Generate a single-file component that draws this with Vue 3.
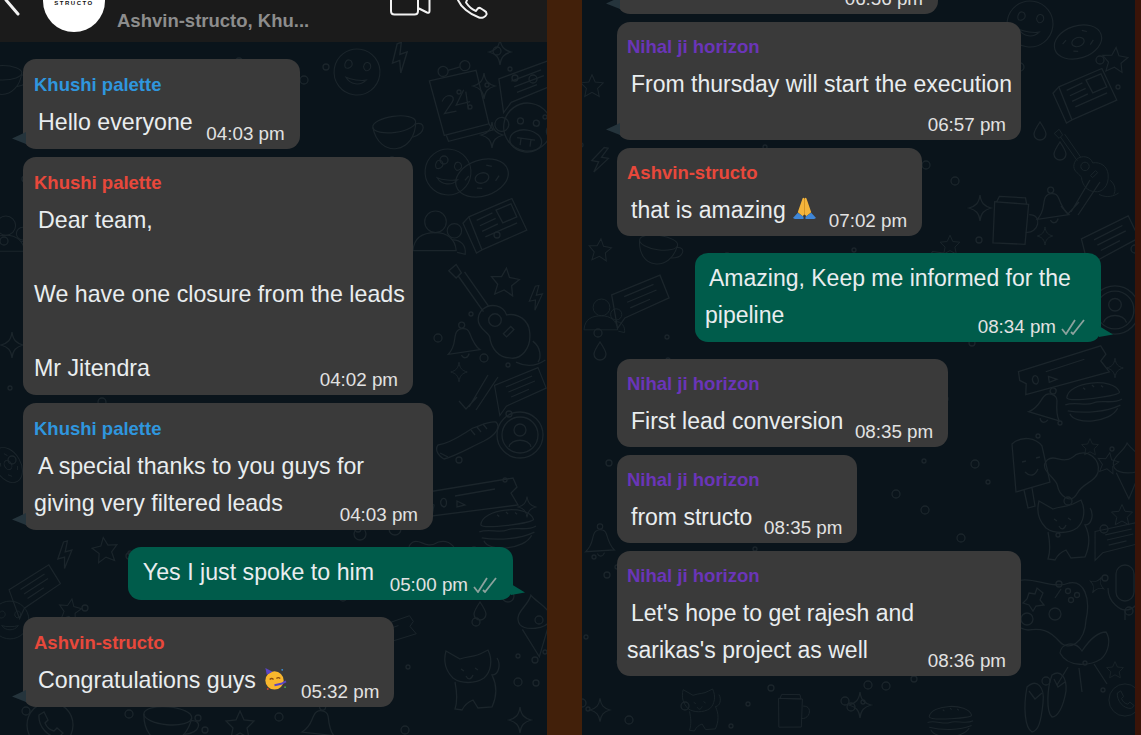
<template>
  <div class="screen">
    <svg class="wallpaper" width="1141" height="735" viewBox="0 0 1141 735" aria-hidden="true">
      <defs>
        <g id="d-star"><path d="M0-14 4-5 14-4 7 3 9 13 0 8-9 13-7 3-14-4-4-5Z" /></g>
        <g id="d-spark"><path d="M0-13C1-5 4-2 11 0 4 2 1 5 0 13-1 5-4 2-11 0-4-2-1-5 0-13Z" /></g>
        <g id="d-drop"><path d="M0-8C4-2 6 1 6 4A6 6 0 0 1-6 4C-6 1-4-2 0-8Z" /></g>
        <g id="d-bolt"><path d="M2-13-8 2-1 2-4 13 8-3 1-3 6-13Z" /></g>
        <g id="d-face">
          <circle r="27" />
          <path d="M-15-9C-14-14-8-14-7-9-6-5-11-2-14-3-15-4-16-7-15-9ZM7-9C8-14 14-14 15-9 16-6 13-3 10-3 8-4 6-7 7-9ZM-12 8C-6 16 6 16 12 8 6 10-6 10-12 8Z" />
        </g>
        <g id="d-calendar">
          <path d="M-27-18 20-27 31 27-14 37Z" />
          <path d="M-12 37-10 43 35 33 31 27" />
          <circle cx="-13" cy="-27" r="5" /><circle cx="9" cy="-32" r="5" />
          <path d="M-8-28 4-31" />
          <path d="M-15 3C-11-6 0-3-5 4L-13 15-1 13M7-8-1 7 13 4M9-6 11 12" />
        </g>
        <g id="d-cup">
          <ellipse cx="-3" cy="-9" rx="24" ry="9" />
          <path d="M-27-9C-26 8-16 18-4 18 8 18 19 8 21-9" />
          <path d="M20-6C32-9 32 6 15 8" />
        </g>
        <g id="d-card">
          <path d="M-27-10 24-21 29 3-18 15-27 24Z" />
          <path d="M-15-6 16-13M-13 0 18-7M-11 6 10 1" />
        </g>
        <g id="d-monkey">
          <circle cx="0" cy="-5" r="24" />
          <circle cx="-26" cy="-4" r="7" /><circle cx="26" cy="-4" r="7" />
          <ellipse cx="0" cy="9" rx="16" ry="11" />
          <circle cx="-8" cy="-10" r="3" /><circle cx="8" cy="-10" r="3" />
          <path d="M-9 7 9 7M-5 7-5 14M5 7 5 14" />
        </g>
        <g id="d-paper">
          <path d="M-22-13 24-22 32 12-16 22Z" />
          <path d="M-22-13-29-8-22 24-16 22" />
          <path d="M-15-8 2-12M-13-2 4-6M-12 4 5 0M-10 10 24 3M6-14 22-17 25-3 10 0Z" />
        </g>
        <g id="d-donut">
          <ellipse rx="27" ry="18" />
          <ellipse rx="7" ry="5" />
          <path d="M-17-3-12-6M-8 8-3 10M12 7 17 3M8-11 13-8" />
        </g>
        <g id="d-person">
          <circle cx="-5" cy="-18" r="12" />
          <path d="M-30 14C-29-2-18-6-5-6 8-6 17 1 18 14Z" />
          <circle cx="16" cy="-8" r="8" />
          <path d="M14 2C24 2 29 9 28 18L19 16" />
        </g>
        <g id="d-guitar">
          <path d="M-44-45-37-51-32-43-37-38Z" />
          <path d="M-35-40-11-6M-29-44-6-11" />
          <path d="M-12-8C-4-15 8-12 11-3 22-5 32 2 33 13 35 30 24 40 14 38 4 38-4 29-5 18-7 13-16 10-16 2-16-2-14-6-12-8Z" />
          <circle cx="0" cy="2" r="6" />
          <path d="M8 15 15 8 18 11 11 18Z" />
          <path d="M20 42C32 48 42 44 48 40M36 22C44 28 44 38 41 42" />
        </g>
        <g id="d-bell">
          <path d="M-16 13C-8 6-9-1-7-6-5-13 5-13 7-7 9 0 11 7 16 11Z" />
          <circle cy="-15" r="3" />
          <path d="M-3 15C-1 19 3 19 5 14" />
        </g>
        <g id="d-checks"><path d="M-19 6-12 14-1 2M-9 12 10-20M-2 15 20-18" /></g>
        <g id="d-shoe">
          <path d="M-32 10C-18 8-6-2 3-7 10-9 18-14 26-13 31-8 26 0 14 6-1 13-14 21-26 24-33 20-35 14-32 10Z" />
          <path d="M-30 18-22 22M1-5 5 0M7-8 11-3M13-11 17-6" />
        </g>
        <g id="d-avatar">
          <circle r="23" /><circle r="18" />
          <circle cy="-5" r="6" />
          <path d="M-11 12C-9 3 9 3 11 12" />
        </g>
        <g id="d-ticket">
          <path d="M-47 0 38-14 42-5 36 1 43 13-43 24-41 13-47 9Z" />
          <path d="M-20 4 20-3M-33 7C-28 4-27 14-31 15-35 14-35 9-33 7ZM-18 9-10 13-18 15Z" />
        </g>
        <g id="d-burger">
          <path d="M-26-4C-24-20 22-22 27-6 27-2-25 1-26-4Z" />
          <path d="M-28 3C-18 0-8 6 0 3 8 0 20 6 29 1M-26 9C-10 13 12 13 27 7M-24 12C-20 24 16 24 24 10" />
          <path d="M-9-13-7-11M0-15 2-13M9-14 11-12" />
        </g>
        <g id="d-popsicle">
          <path d="M-16-24C-6-33 8-30 14-22L22 14-12 24Z" />
          <path d="M-4 22 0 40 7 38 4 20" />
          <path d="M-6-6-2-7M8-10 12-11M-3 4C2 9 7 8 10 1" />
        </g>
        <g id="d-blob"><path d="M-25-12C-18-20-9-8 2-22 13-30 27-22 27-9 26 2 14 4 10 16 6 28-7 22-11 11-15 3-33-1-25-12Z" /></g>
        <g id="d-cat">
          <path d="M-24-29-10-21C-2-24 6-23 12-27L18-30C23-20 21-8 14-2 5 4-9 4-17-2-24-9-27-18-24-29Z" />
          <path d="M-9-11-6-9M5-12 8-10M-4-4C-2 0 1 0 3-5" />
          <path d="M-15 2C-13 12-12 20-15 29L-8 30C-5 24-2 22 3 20L8 28 22 27C27 16 27 5 22-5 29-5 31-16 27-22" />
        </g>
        <g id="d-controller">
          <path d="M-45-22C-30-38-5-17 14-25 29-28 36-10 31 12 30 34 14 45 4 33-6 22-14 20-27 22-44 21-51-5-45-22Z" />
          <path d="M-26-15-20-14-18-20-12-15-15-8-11-3-19-2-22 3-26-3-32-5-28-9Z" />
          <path d="M0-10 6-19" />
          <circle cx="13" cy="-17" r="2.5" /><circle cx="22" cy="-13" r="2.5" /><circle cx="16" cy="-8" r="2.5" />
          <circle cx="-28" cy="11" r="6" /><circle cx="0" cy="6" r="6" />
        </g>
        <g id="d-chair">
          <path d="M-25-7C-24-17-10-20-3-9 3-18 12-28 21-28 26-21 24-8 16-1 5 6-17 8-25-7Z" />
          <path d="M-17 7-28 25M-6 8-3 32M9 4 22 24" />
        </g>
        <g id="d-flops">
          <path d="M-20-16C-10-25-2-16-4 0-6 20-9 28-15 29-22 25-24 5-20-16ZM-18-12-12-4-5-10" />
          <path d="M5-28C14-34 20-25 19-12 16 6 10 14 5 14-1 9 0-15 5-28ZM7-24 11-16 18-21" />
        </g>
        <g id="d-mic">
          <rect x="-9" y="-25" width="18" height="36" rx="9" />
          <path d="M-17-2C-17 14-3 20 0 20 8 20 16 14 17-2M0 20 0 30" />
        </g>
        <g id="d-icecream">
          <path d="M-15-2C-21-14-5-19-1-30 4-22 20-14 15-2 10 5-10 5-15-2Z" />
          <path d="M-13 3 1 32 13 3" />
        </g>
        <g id="d-camera">
          <path d="M-22-14-10-15-7-21 6-21 10-16 24-17 26 15-20 18Z" />
          <circle cx="3" cy="0" r="10" /><circle cx="3" cy="0" r="5" />
        </g>
        <g id="d-jar">
          <path d="M-18-18 16-20 18 20-14 23ZM-14-24 12-26 14-20-16-18Z" />
          <path d="M18-10C32-12 30 8 17 8" />
        </g>
        <g id="d-phone">
          <circle r="23" />
          <path d="M-11-10-6-13-2-5-5-2C-3 3 0 5 4 6L7 3 13 8 9 12C-2 13-12 1-11-10Z" />
        </g>
      </defs>
      <g class="doodles">
        <use v-for="(d, i) in doodles" :key="i" :href="'#d-' + d[0]" :transform="`translate(${d[1]} ${d[2]}) rotate(${d[3] || 0}) scale(${d[4] || 1})`" />
        <circle v-for="(c, i) in specks" :key="'c' + i" :cx="c.x" :cy="c.y" :r="c.r" />
      </g>
    </svg>

    <section class="panel">
      <header class="chat-header">
        <svg class="back" width="22" height="20" viewBox="0 0 22 20"><path d="M6 0 18 14" /></svg>
        <div class="avatar"><span>STRUCTO</span></div>
        <div class="members">Ashvin-structo, Khu...</div>
        <svg class="video" width="42" height="18" viewBox="0 0 42 18">
          <path d="M2 0V11Q2 14.500 5.500 14.500H25.500Q29 14.500 29 11V0M29 8 38 12.500Q40.500 13.500 40.500 11V0" />
        </svg>
        <svg class="call" width="32" height="20" viewBox="0 0 32 20">
          <path d="M1 0C4 7 12 14 22 17.500 25 18.500 28.500 17 29.500 14.500 30 12.500 29 11.500 27 10.500L24 8.500C22.500 7.500 21 8 20 9.500L19 11C15 9.500 12 7 9 2.500L10 0" />
        </svg>
      </header>
      <div class="messages left">
        <div v-for="m in leftMessages" :key="m.id" class="bubble" :class="{ sent: m.sent, tail: m.tail, spaced: m.spaced }" :style="m.width ? { width: m.width + 'px' } : null">
          <div v-if="m.name" class="name" :class="m.color">{{ m.name }}</div>
          <div class="body">{{ m.text }}<svg v-if="m.emoji === 'party'" class="emoji" width="26" height="26" viewBox="0 0 26 26">
              <circle cx="13" cy="15" r="9.500" fill="#f8b62d" />
              <path d="M5 9 3.500 2 11 6Z" fill="#5b45c4" />
              <path d="M8 14Q10 12 12 14M15 13Q17 11 19 13" stroke="#8a4a10" stroke-width="1.300" fill="none" />
              <path d="M13 20 20 18.500 25 16" stroke="#5b45c4" stroke-width="2" fill="none" />
              <circle cx="6" cy="24" r="1" fill="#d0402c" /><circle cx="21" cy="4" r="1" fill="#3a8fd8" /><circle cx="24" cy="22" r="1" fill="#4aa04a" />
            </svg><span v-if="!m.below" class="spacer"></span></div>
          <div class="time">{{ m.time }}<svg v-if="m.sent" class="ticks" width="25" height="16" viewBox="0 0 25 16"><path d="M1 10 5 15 14 1M10 13 12 15 23 1" /></svg></div>
        </div>
      </div>
    </section>

    <div class="divider"></div>

    <section class="panel">
      <div class="messages right">
        <div v-for="m in rightMessages" :key="m.id" class="bubble" :class="{ sent: m.sent, tail: m.tail, spaced: m.spaced, clipped: m.clipped, 'time-row': m.timeRow }" :style="m.width ? { width: m.width + 'px' } : null">
          <div v-if="m.name" class="name" :class="m.color">{{ m.name }}</div>
          <div class="body">{{ m.text }}<svg v-if="m.emoji === 'pray'" class="emoji" width="26" height="26" viewBox="0 0 26 26">
              <path d="M13 3C12 1 11 2 10.500 4L6 17 11 21 13 19 15 21 20 17 15.500 4C15 2 14 1 13 3Z" fill="#f5b53c" />
              <path d="M13 3V19" stroke="#c98a1e" stroke-width="0.800" />
              <path d="M1 23 6 17.500 12 21.500 12 24H3ZM25 23 20 17.500 14 21.500 14 24H23Z" fill="#3f86d6" />
            </svg><span v-if="!m.below" class="spacer"></span></div>
          <div class="time">{{ m.time }}<svg v-if="m.sent" class="ticks" width="25" height="16" viewBox="0 0 25 16"><path d="M1 10 5 15 14 1M10 13 12 15 23 1" /></svg></div>
        </div>
      </div>
    </section>

    <div class="edge"></div>
  </div>
</template>

<script setup>
const leftMessages = [
  { id: 1, name: 'Khushi palette', color: 'blue', text: 'Hello everyone', time: '04:03 pm', tail: true },
  { id: 2, name: 'Khushi palette', color: 'red', text: 'Dear team,\n\nWe have one closure from the leads\n\nMr Jitendra', time: '04:02 pm', width: 390, below: true },
  { id: 3, name: 'Khushi palette', color: 'blue', text: 'A special thanks to you guys for giving very filtered leads', time: '04:03 pm', width: 410, below: true, tail: true },
  { id: 4, sent: true, spaced: true, text: 'Yes I just spoke to him', time: '05:00 pm' },
  { id: 5, name: 'Ashvin-structo', color: 'red', text: 'Congratulations guys ', emoji: 'party', time: '05:32 pm', tail: true, spaced: true }
]

const rightMessages = [
  { id: 1, clipped: true, text: ' ', time: '06:56 pm', width: 321, below: true, tail: true },
  { id: 2, name: 'Nihal ji horizon', color: 'purple', text: 'From thursday will start the execution', time: '06:57 pm', width: 404, below: true, timeRow: true, tail: true },
  { id: 3, name: 'Ashvin-structo', color: 'red', text: 'that is amazing ', emoji: 'pray', time: '07:02 pm' },
  { id: 4, sent: true, spaced: true, text: 'Amazing, Keep me informed for the pipeline', time: '08:34 pm', width: 406, below: true },
  { id: 5, name: 'Nihal ji horizon', color: 'purple', text: 'First lead conversion', time: '08:35 pm', spaced: true },
  { id: 6, name: 'Nihal ji horizon', color: 'purple', text: 'from structo', time: '08:35 pm' },
  { id: 7, name: 'Nihal ji horizon', color: 'purple', text: "Let's hope to get rajesh and\nsarikas's project as well", time: '08:36 pm', width: 404, below: true }
]

// wallpaper: [shape, x, y, rotation, scale]
const doodles = [
  ['face', 357, 72, 8, 0.85], ['calendar', 457, 98, -2], ['spark', 484, 86], ['spark', 500, 52], ['cup', 398, 132, -8, 0.9],
  ['spark', 492, 135], ['face', 448, 172, 6, 0.85], ['monkey', 527, 132, 8], ['card', 527, 85, -8], ['bolt', 400, 58, -20, 1.1],
  ['paper', 493, 225, -12], ['donut', 482, 178, -18], ['person', 440, 238, 0, 0.9], ['star', 505, 282, 6], ['bolt', 536, 298, -12, 0.9],
  ['guitar', 495, 318, 0, 1.05], ['bell', 463, 340, -5], ['spark', 459, 372, 0, 0.75], ['checks', 478, 395], ['card', 520, 390, -10, 0.9],
  ['shoe', 470, 435, 0], ['avatar', 520, 435], ['ticket', 475, 492], ['burger', 507, 527, -4], ['spark', 527, 507, 0, 0.8],
  ['star', 105, 550, -8, 0.9], ['bolt', 65, 555, -15], ['card', 35, 590, -20, 0.9], ['phone', 50, 725], ['cat', 470, 680], ['icecream', 535, 625, -6],
  ['drop', 360, 530], ['drop', 395, 525], ['star', 70, 610, 10, 0.8], ['spark', 520, 720], ['face', 10, 620, 0, 0.7],
  ['cup', 170, 725, 5], ['star', 240, 725], ['bell', 320, 722, 10], ['ticket', 385, 630, -10, 0.7], ['blob', 430, 560, 20, 0.9], ['drop', 480, 610], ['drop', 508, 592],
  ['person', 10, 240, 0, 0.8], ['spark', 12, 345], ['cup', 5, 80, 0, 0.8], ['donut', 8, 465, 60, 0.7],
  ['face', 1030, 24, 8, 0.85], ['donut', 1078, 42, -18, 0.9], ['star', 1115, 60, 5, 0.9], ['paper', 1083, 95, -12], ['star', 592, 86, 0, 0.8],
  ['camera', 936, 270, 8, 0.85], ['jar', 1010, 222, 8], ['bell', 1052, 205, -5], ['spark', 980, 208], ['spark', 1045, 236, 0, 0.7], ['card', 1110, 242, -14],
  ['star', 950, 245, 0, 0.7], ['avatar', 1115, 310, 0, 1.05], ['checks', 1080, 200], ['guitar', 1085, 165, 0, 0.7], ['drop', 1040, 130], ['drop', 1060, 150],
  ['bell', 1048, 405, 20], ['burger', 1093, 400, -4], ['popsicle', 1028, 468], ['blob', 1070, 476, 10], ['star', 1090, 447, 0, 0.6], ['star', 1108, 463, 10, 0.75],
  ['cat', 1063, 530], ['star', 1122, 515, 0, 0.75], ['icecream', 1128, 470, 0, 0.9], ['card', 1118, 540, 0, 0.85], ['controller', 1055, 608], ['spark', 1097, 585, 30, 0.7],
  ['mic', 1125, 590], ['chair', 1085, 660], ['star', 1115, 670, 0, 0.6], ['flops', 1047, 703], ['phone', 1125, 700, 0, 0.7], ['ticket', 1065, 365, -8],
  ['spark', 1115, 368, 0, 0.75], ['bolt', 600, 160, 10], ['star', 600, 250, 5, 0.8], ['spark', 600, 710, 0, 0.9], ['card', 640, 300, -10], ['cup', 660, 250, 8, 0.8],
  ['person', 605, 320, 0, 0.7], ['drop', 600, 350], ['bell', 600, 540, 0, 0.9], ['cat', 700, 710, 0, 0.7], ['jar', 790, 712, 5, 0.7], ['spark', 860, 705], ['burger', 950, 720, 0, 0.8]
]

// small rings scattered between the larger shapes
function scatter(count) {
  const dots = []
  let seed = 41
  for (let i = 0; i < count; i++) {
    seed = (seed * 1103 + 12345) % 65536
    const x = seed % 1141
    seed = (seed * 1103 + 12345) % 65536
    const y = 42 + (seed % 693)
    dots.push({ x, y, r: 2 + (i % 3) })
  }
  return dots
}
const specks = scatter(210)
</script>

<style scoped>
.screen { position: relative; display: grid; grid-template-columns: 547px 35px 553px 6px; width: 1141px; height: 735px; overflow: hidden; background: #0a141b; font-family: "Liberation Sans", Arial, sans-serif; color: #e9edef; }
.wallpaper { position: absolute; top: 0; left: 0; }
.doodles { fill: none; stroke: #1b252b; stroke-width: 1.300; }
.panel { position: relative; display: flex; flex-direction: column; min-width: 0; height: 735px; overflow: hidden; }
.divider { position: relative; background: #42200a; }
.edge { position: relative; background: #3a1408; }

.chat-header { display: flex; flex: none; height: 42px; background: #1b1b1b; overflow: hidden; }
.back { flex: none; margin-right: 21px; }
.back path { fill: none; stroke: #f2f2f2; stroke-width: 3; stroke-linecap: round; }
.avatar { flex: none; display: flex; align-items: center; justify-content: center; width: 62px; height: 62px; margin-top: -30px; border-radius: 50%; background: #fff; }
.avatar span { color: #111; font-size: 6px; font-weight: 700; letter-spacing: 1.500px; padding-top: 3px; }
.members { flex: none; width: 272px; margin: 9px 0 0 12px; color: #8d8d8d; font-size: 18.500px; font-weight: 700; line-height: 24px; }
.video { flex: none; }
.call { flex: none; margin-left: 26px; }
.video path, .call path { fill: none; stroke: #f2f2f2; stroke-width: 2; stroke-linejoin: round; stroke-linecap: round; }

.messages { display: flex; flex-direction: column; align-items: flex-start; }
.messages.left { padding: 17px 34px 0 23px; }
.messages.right { padding: 0 34px 0 35px; }

.bubble { position: relative; flex: none; box-sizing: border-box; width: fit-content; padding: 6.500px 6px 8.500px 11px; margin-bottom: 8px; border-radius: 13px; background: #3a3a3a; }
.right .bubble { padding-left: 10px; padding-right: 4px; padding-bottom: 7.500px; }
.bubble.spaced { margin-top: 9px; }
.bubble.sent { align-self: flex-end; padding-bottom: 9.500px; background: #005c4b; }
.right .bubble.sent { padding-bottom: 8.500px; }
.bubble.sent .spacer { width: 133px; }
.bubble.clipped { height: 60px; margin-top: -46px; }
.right .bubble.time-row { padding-bottom: 37.500px; }
.bubble.tail::before { content: ""; position: absolute; left: -11px; bottom: 5px; width: 14px; height: 12px; background: #25343c; clip-path: polygon(100% 0, 100% 100%, 0 55%); }
.bubble.sent::after { content: ""; position: absolute; right: -12px; bottom: 5px; width: 14px; height: 11px; background: #005c4b; clip-path: polygon(0 0, 100% 78%, 0 100%); }

.name { height: 38px; padding-top: 7px; box-sizing: border-box; font-size: 18.500px; font-weight: 700; line-height: 24px; }
.right .name { height: 37px; padding-top: 6px; }
.blue { color: #2f96de; }
.red { color: #e8483b; }
.purple { color: #6a35b8; }

.body { font-size: 23.200px; line-height: 37px; white-space: pre-wrap; text-indent: 4px; }
.right .body { font-size: 23px; }
.spacer { display: inline-block; width: 101px; height: 1px; }
.emoji { width: 25px; height: 25px; vertical-align: -3px; }

.time { position: absolute; right: 15px; bottom: 3px; display: flex; align-items: center; font-size: 18.800px; line-height: 24px; color: #e2e2e2; white-space: nowrap; }
.ticks { margin-left: 5px; }
.ticks path { fill: none; stroke: #8ba29d; stroke-width: 1.800; }
</style>

<style>
html, body { background: #0a141b; }
</style>
